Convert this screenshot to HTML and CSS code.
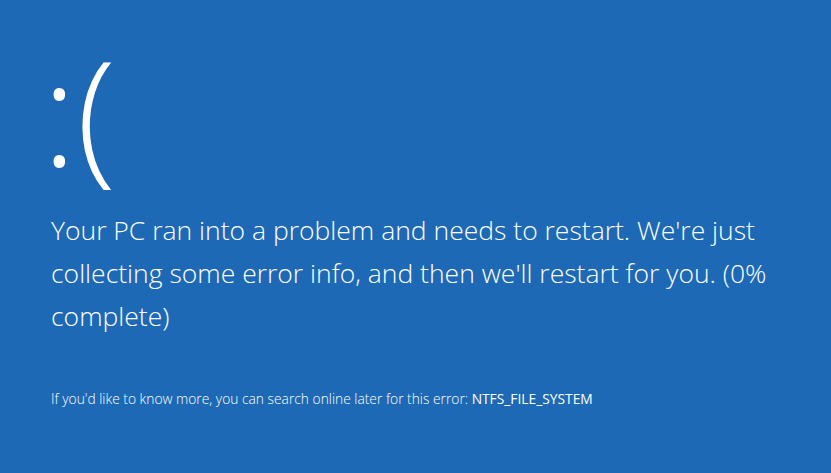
FILE: index.html
```html
<!DOCTYPE html>
<html lang="en">
<head>
  <meta charset="UTF-8">
  <title>Your PC ran into a problem</title>
  <link rel="stylesheet" href="styles.css">
</head>
<body>
<div class="bsod">
  <div class="face">:(</div>
  <div class="message">Your PC ran into a problem and needs to restart. We're just collecting some error info, and then we'll restart for you. (0% complete)</div>
  <div class="details">If you'd like to know more, you can search online later for this error: <span class="code">NTFS_FILE_SYSTEM</span></div>
</div>
</body>
</html>
```

FILE: styles.css
```css
*{ box-sizing:border-box; }
html,body{
  margin:0; padding:0;
  width:100%; height:100%;
  overflow:hidden;
  background:#1e69b5;
  color:#fff;
  font-family:'Open Sans', 'Noto Sans', sans-serif;
}

.bsod{
  padding:38px 0 0 42px;
  display:flex; flex-direction:column;
}

/* ================= FACE ================= */
.face{
  font-size:145px;
  font-weight:300;
  line-height:1;
  height:171px;
}

/* ================= MESSAGE ================= */
.message{
  width:790px;
  font-size:26.5px;
  font-weight:300;
  line-height:43px;
  padding-left:9px;
}

.details{
  margin-top:51px;
  padding-left:9px;
  font-size:13.8px;
  font-weight:300;
}
.code{ font-weight:400; }
```
